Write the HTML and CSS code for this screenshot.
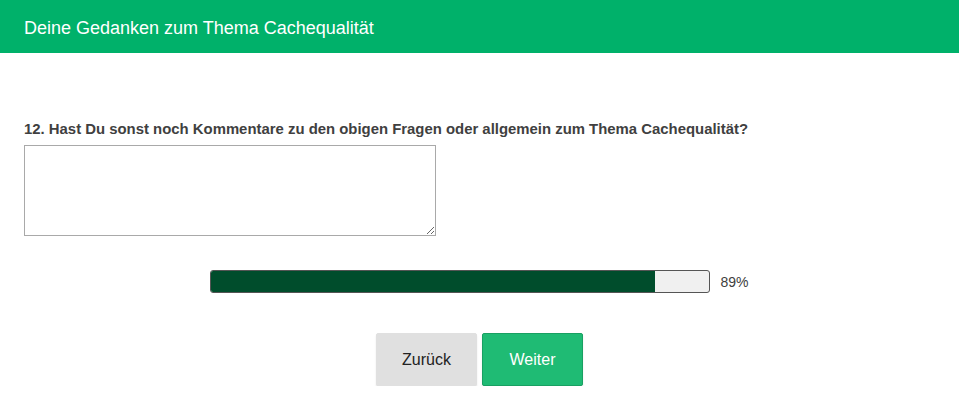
FILE: index.html
```html
<!DOCTYPE html>
<html lang="de">
<head>
    <meta charset="UTF-8" />
    <title>Umfrage Cachequalität</title>
    <link rel="stylesheet" href="styles.css">
</head>
<body>

    <header class="survey-header">
        Deine Gedanken zum Thema Cachequalität
    </header>

    <main class="survey-body">
        <div class="question">
            <label for="q12" class="question-title">12. Hast Du sonst noch Kommentare zu den obigen Fragen oder allgemein zum Thema Cachequalität?</label>
            <textarea id="q12" class="comment-box"></textarea>
        </div>

        <div class="progress-row">
            <div class="progress">
                <div class="progress-fill" style="width: 89%;"></div>
            </div>
            <span class="progress-text">89%</span>
        </div>

        <div class="nav-buttons">
            <button type="button" class="btn btn-back">Zurück</button>
            <button type="button" class="btn btn-next">Weiter</button>
        </div>
    </main>

</body>
</html>
```

FILE: styles.css
```css
body {
    margin: 0;
    font-family: "Liberation Sans", Arial, sans-serif;
    background-color: white;
    color: #404040;
}

.survey-header {
    background-color: #00b16a;
    color: white;
    font-size: 18px;
    height: 53px;
    line-height: 56px;
    padding: 0 24px;
    box-sizing: border-box;
}

.survey-body {
    padding: 68px 24px 0;
}

.question-title {
    display: block;
    font-size: 14.9px;
    font-weight: bold;
    color: #404040;
    line-height: 17px;
    margin-bottom: 7px;
}

.comment-box {
    display: block;
    width: 412px;
    height: 91px;
    box-sizing: border-box;
    border: 1px solid #a9a9a9;
    margin: 0;
    padding: 2px;
    font-family: inherit;
}

.progress-row {
    display: flex;
    align-items: center;
    justify-content: center;
    gap: 10px;
    margin-top: 34px;
}

.progress {
    width: 500px;
    height: 23px;
    box-sizing: border-box;
    border: 1px solid #555;
    border-radius: 3px;
    background-color: #f0f0f0;
    overflow: hidden;
}

.progress-fill {
    height: 100%;
    background-color: #004d2c;
}

.progress-text {
    font-size: 14px;
    color: #404040;
}

.nav-buttons {
    display: flex;
    justify-content: center;
    gap: 5px;
    margin-top: 40px;
}

.btn {
    width: 101px;
    height: 53px;
    font-family: inherit;
    font-size: 16px;
    border-radius: 2px;
    cursor: pointer;
    box-shadow: 0 2px 2px rgba(0, 0, 0, 0.1);
}

.btn-back {
    background-color: #e0e0e0;
    border: 1px solid #e0e0e0;
    color: #222;
}

.btn-next {
    background-color: #1fbb74;
    border: 1px solid #19a062;
    color: white;
}
```
